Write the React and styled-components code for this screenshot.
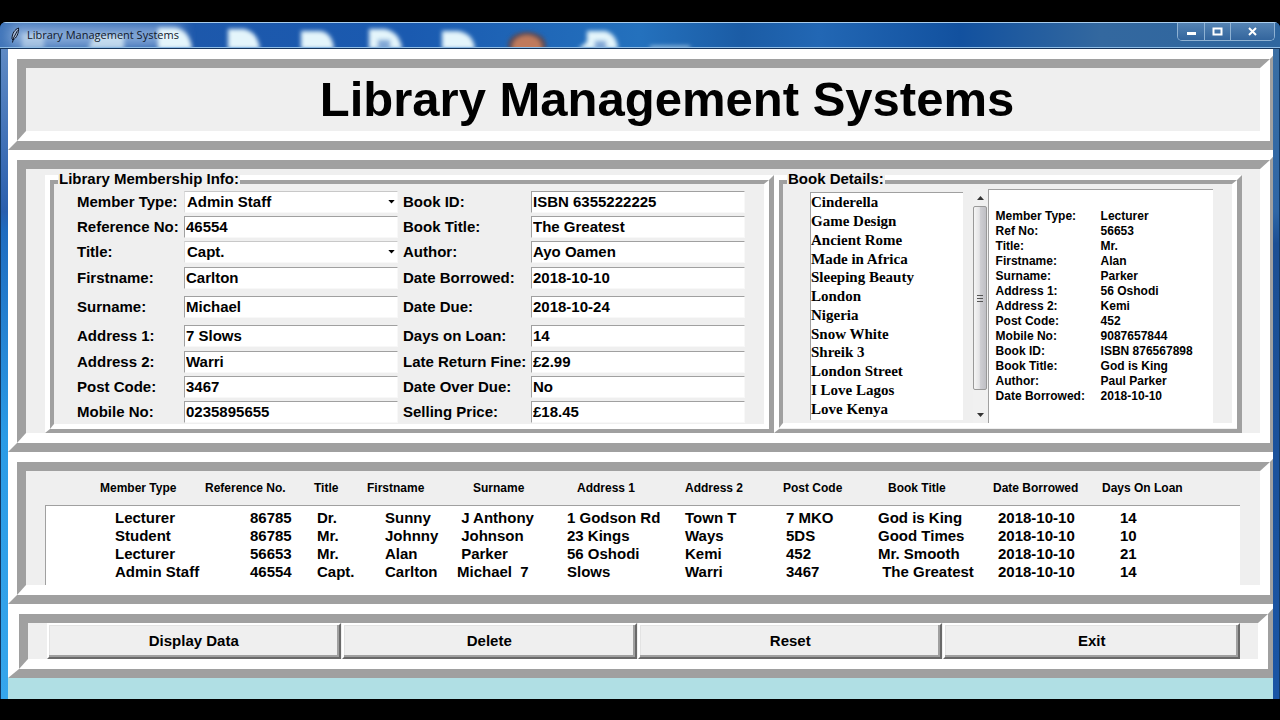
import React from "react";
import styled, { createGlobalStyle, css } from "styled-components";

const WHITE = "#ffffff";
const GREY = "#a0a0a0";
const FACE = "#efefef";
const SANS = '"Liberation Sans", Arial, sans-serif';

const GlobalStyle = createGlobalStyle`
  * { box-sizing: border-box; }
  body { margin: 0; background: #000; font-family: ${SANS}; color: #000; }
`;

const Screen = styled.div`
  display: flex;
  flex-direction: column;
  min-height: 100vh;
  padding: 22px 0 21px;
  background: #000;
`;

const Window = styled.div`
  flex: 1;
  display: flex;
  flex-direction: column;
  border-radius: 6px 6px 0 0;
  overflow: hidden;
`;

const TitleBar = styled.header`
  position: relative;
  display: flex;
  align-items: center;
  height: 27px;
  padding: 0 0 2px 9px;
  border-top: 1px solid #a9cdec;
  border-bottom: 1px solid #16355c;
  background: #1a5bab;
  overflow: hidden;
`;

const Wallpaper = styled.svg`
  position: absolute;
  inset: 0;
  width: 100%;
  height: 100%;
`;

const Feather = styled.svg`
  position: relative;
  width: 12px;
  height: 16px;
`;

const WindowTitle = styled.span`
  position: relative;
  padding-left: 6px;
  font: 11px/16px "Open Sans", "Noto Sans", sans-serif;
  color: #10182c;
`;

const Caption = styled.div`
  position: relative;
  align-self: flex-start;
  display: flex;
  margin-left: auto;
  margin-right: 5px;
  border: 1px solid #8fb2d3;
  border-top: 0;
  border-radius: 0 0 5px 5px;
  overflow: hidden;
`;

const CaptionButton = styled.button`
  display: flex;
  align-items: center;
  justify-content: center;
  width: ${(p) => (p.$wide ? 44 : 26)}px;
  height: 17px;
  padding: 0;
  border: 0;
  border-left: ${(p) => (p.$first ? 0 : 1)}px solid #8fb2d3;
  background: linear-gradient(#5483b3, #33659d);
`;

const SideEdges = styled.div`
  flex: 1;
  display: flex;
  flex-direction: column;
  border-left: 1px solid #123a66;
  border-right: 1px solid #123a66;
  background: linear-gradient(#5f8ac4 0%, #2a5fae 25%, #1f6cc0 28%, #2b9be6 60%, #36a6ec 100%) left / 50% 100% no-repeat,
    linear-gradient(#3a6ea3 0%, #2e66a6 25%, #1c4f94 30%, #1a55a5 100%) right / 50% 100% no-repeat;
`;

const Client = styled.main`
  flex: 1;
  margin: 0 6px 0 7px;
  background: #b0dfe4;
  overflow: hidden;
`;

/* A wide ridge: a raised outer band round a sunken inner band. */
const Outer = styled.section`
  margin-right: ${(p) => (p.$inset ? -4 : -6)}px;
  border-style: solid;
  border-width: 10px 9px 9px ${(p) => (p.$inset ? 11 : 9)}px;
  border-color: ${WHITE} ${GREY} ${GREY} ${WHITE};
`;

const Inner = styled.div`
  border-style: solid;
  border-width: 9px 10px 10px 9px;
  border-color: ${GREY} ${WHITE} ${WHITE} ${GREY};
  background: ${FACE};
`;

const Panel = ({ inset, children }) => (
  <Outer $inset={inset}>
    <Inner>{children}</Inner>
  </Outer>
);

const Heading = styled.h1`
  margin: 0;
  padding-left: 48px;
  font-size: 49px;
  line-height: 63px;
  text-align: center;
`;

const Details = styled.div`
  display: flex;
  align-items: stretch;
  padding: 0 18px 0 19px;
`;

const Group = styled.fieldset`
  flex: ${(p) => p.$share} 1 0;
  display: flex;
  flex-direction: column;
  min-width: 0;
  margin: 0;
  padding: 0;
  border-style: solid;
  border-width: 5px 5px 4px 5px;
  border-color: ${WHITE} ${GREY} ${GREY} ${WHITE};
`;

const Legend = styled.legend`
  position: relative;
  z-index: 1;
  margin-left: 8px;
  padding: 3px 1px 0;
  background: ${FACE};
  font-weight: bold;
  font-size: 15px;
  line-height: 14px;
`;

const GroupBody = styled.div`
  display: flex;
  margin-top: -6px;
  border-style: solid;
  border-width: 4px 5px 5px 4px;
  border-color: ${GREY} ${WHITE} ${WHITE} ${GREY};
`;

const Fields = styled.div`
  flex: 1;
  display: grid;
  grid-template-columns: 107px minmax(0, 1fr) 133px minmax(0, 1fr);
  grid-template-rows: 25px 25px 25px 27px 31px 27px 25px 25px 25px;
  align-items: center;
  padding: 5px 19px 0 23px;
`;

const Label = styled.label`
  padding-left: ${(p) => (p.$second ? 5 : 0)}px;
  font-weight: bold;
  font-size: 15px;
  line-height: 18px;
  white-space: nowrap;
`;

const fieldBox = css`
  width: 100%;
  min-width: 0;
  height: 22px;
  margin: 0;
  border: 1px solid ${GREY};
  border-right-color: #f8f8f8;
  border-bottom-color: #f8f8f8;
  border-radius: 0;
  outline: 0;
  background-color: #fff;
  color: #000;
  font: bold 15px/18px ${SANS};
`;

const TextField = styled.input`
  ${fieldBox}
  padding: 0 1px;
`;

const ComboWrap = styled.div`
  position: relative;
  display: flex;
`;

const Combo = styled.select`
  ${fieldBox}
  appearance: none;
  padding: 0 20px 0 2px;
  border-top-color: #c8c8c8;
  border-left-color: #dcdcdc;
`;

const ComboArrow = styled.svg`
  position: absolute;
  right: 3px;
  top: 9px;
  width: 7px;
  height: 4px;
  pointer-events: none;
`;

const BookPane = styled.div`
  flex: 1;
  display: flex;
  align-items: stretch;
  height: 239px;
  padding: 5px 19px 0 27px;
`;

const BookList = styled.select`
  flex: 152 1 0;
  min-width: 0;
  height: 228px;
  margin: 3px 10px 0 0;
  padding: 0;
  border: 1px solid ${GREY};
  border-right: 0;
  border-bottom: 0;
  border-radius: 0;
  outline: 0;
  overflow: hidden;
  background: #fff;
  color: #000;
  font: bold 15px/19px "Liberation Serif", "Times New Roman", serif;
`;

const Book = styled.option`
  height: 19px;
  min-height: 0;
  padding: 1px 0 0;
  font-weight: bold;
  line-height: 18px;
  &:nth-child(4n) { height: 18px; }
`;

const Scrollbar = styled.div`
  display: flex;
  flex-direction: column;
  width: 15px;
  background: #f0f0f0;
`;

const ScrollButton = styled.button`
  display: flex;
  align-items: center;
  justify-content: center;
  width: 15px;
  height: 17px;
  padding: 0;
  border: 0;
  background: transparent;
`;

const Thumb = styled.div`
  display: flex;
  flex-direction: column;
  align-items: center;
  justify-content: center;
  gap: 2px;
  height: 184px;
  width: 14px;
  border: 1px solid #999;
  border-radius: 2px;
  background: linear-gradient(90deg, #f5f5f5, #e4e4e6 45%, #cfcfd3 50%, #bfbfc4);
`;

const Grip = styled.span`
  width: 6px;
  height: 1px;
  background: #555;
`;

const Track = styled.div`
  flex: 1;
`;

const Receipt = styled.dl`
  flex: 218 1 0;
  display: grid;
  grid-template-columns: 105px 1fr;
  grid-auto-rows: 15px;
  margin: 0;
  padding: 19px 0 0 7px;
  border-top: 1px solid ${GREY};
  border-left: 1px solid ${GREY};
  background: #fff;
  font-weight: bold;
  font-size: 12px;
  line-height: 15px;
  white-space: nowrap;

  dd { margin: 0; }
`;

const Loans = styled.div`
  padding: 0 20px 0 19px;
`;

const LoanTable = styled.table`
  width: 100%;
  table-layout: fixed;
  border-collapse: separate;
  border-spacing: 0;
`;

const HeadCell = styled.th`
  height: 34px;
  padding: 0 0 0 ${(p) => p.$indent}px;
  font-size: 12px;
  text-align: left;
  white-space: nowrap;
`;

const Cell = styled.td`
  height: 18px;
  padding: 0 0 0 ${(p) => p.$indent}px;
  background: #fff;
  font-weight: bold;
  font-size: 15px;
  line-height: 18px;
  white-space: pre;

  &:first-child { border-left: 1px solid ${GREY}; }
  tr:first-child > & { padding-top: 3px; border-top: 1px solid ${GREY}; }
  tr:last-child > & { padding-bottom: 4px; }
`;

const Actions = styled.div`
  display: grid;
  grid-template-columns: 294fr 296fr 305fr 297fr;
  column-gap: 1px;
  padding: 0 18px 0 19px;
`;

const ActionButton = styled.button`
  height: 36px;
  padding: 0;
  border-style: solid;
  border-width: 2px;
  border-color: ${WHITE} #696969 #696969 ${WHITE};
  border-radius: 0;
  box-shadow: inset -2px -2px 0 ${GREY}, inset 1px 1px 0 #e3e3e3;
  background: ${FACE};
  color: #000;
  font: bold 15px/18px ${SANS};
`;

const fields = [
  ["Member Type:", "Admin Staff", "Book ID:", "ISBN 6355222225"],
  ["Reference No:", "46554", "Book Title:", "The Greatest"],
  ["Title:", "Capt.", "Author:", "Ayo Oamen"],
  ["Firstname:", "Carlton", "Date Borrowed:", "2018-10-10"],
  ["Surname:", "Michael", "Date Due:", "2018-10-24"],
  ["Address 1:", "7 Slows", "Days on Loan:", "14"],
  ["Address 2:", "Warri", "Late Return Fine:", "£2.99"],
  ["Post Code:", "3467", "Date Over Due:", "No"],
  ["Mobile No:", "0235895655", "Selling Price:", "£18.45"],
];
const combos = new Set(["Member Type:", "Title:"]);

const books = [
  "Cinderella", "Game Design", "Ancient Rome", "Made in Africa",
  "Sleeping Beauty", "London", "Nigeria", "Snow White", "Shreik 3",
  "London Street", "I Love Lagos", "Love Kenya",
];

const receipt = [
  ["Member Type:", "Lecturer"],
  ["Ref No:", "56653"],
  ["Title:", "Mr."],
  ["Firstname:", "Alan"],
  ["Surname:", "Parker"],
  ["Address 1:", "56 Oshodi"],
  ["Address 2:", "Kemi"],
  ["Post Code:", "452"],
  ["Mobile No:", "9087657844"],
  ["Book ID:", "ISBN 876567898"],
  ["Book Title:", "God is King"],
  ["Author:", "Paul Parker"],
  ["Date Borrowed:", "2018-10-10"],
];

/* Heading, column width, heading indent, value indent */
const columns = [
  ["Member Type", 160, 55, 69],
  ["Reference No.", 109, 0, 45],
  ["Title", 53, 0, 3],
  ["Firstname", 90, 0, 18],
  ["Surname", 110, 16, 0],
  ["Address 1", 118, 10, 0],
  ["Address 2", 98, 0, 0],
  ["Post Code", 95, 0, 3],
  ["Book Title", 115, 10, 0],
  ["Date Borrowed", 109, 0, 5],
  ["Days On Loan", 138, 0, 18],
];

const loans = [
  ["Lecturer", "86785", "Dr.", "Sunny", " J Anthony", "1 Godson Rd", "Town T", "7 MKO", "God is King", "2018-10-10", "14"],
  ["Student", "86785", "Mr.", "Johnny", " Johnson", "23 Kings", "Ways", "5DS", "Good Times", "2018-10-10", "10"],
  ["Lecturer", "56653", "Mr.", "Alan", " Parker", "56 Oshodi", "Kemi", "452", "Mr. Smooth", "2018-10-10", "21"],
  ["Admin Staff", "46554", "Capt.", "Carlton", "Michael  7", "Slows", "Warri", "3467", " The Greatest", "2018-10-10", "14"],
];

const idOf = (label) => label.toLowerCase().replace(/[^a-z0-9]+/g, "");

const Field = ({ label, value, second }) => (
  <>
    <Label htmlFor={idOf(label)} $second={second}>{label}</Label>
    {combos.has(label) ? (
      <ComboWrap>
        <Combo id={idOf(label)} defaultValue={value}>
          <option>{value}</option>
        </Combo>
        <ComboArrow viewBox="0 0 8 5" aria-hidden="true"><path d="M0 0H8L4 4.5Z" /></ComboArrow>
      </ComboWrap>
    ) : (
      <TextField id={idOf(label)} defaultValue={value} />
    )}
  </>
);

const Desktop = () => (
  <Wallpaper aria-hidden="true">
    <defs>
      <filter id="soft" x="-20%" y="-50%" width="140%" height="200%"><feGaussianBlur stdDeviation="2" /></filter>
      <filter id="glow" x="-20%" y="-80%" width="140%" height="260%"><feGaussianBlur stdDeviation="7" /></filter>
      <linearGradient id="sky">
        <stop offset="0" stopColor="#3f74b8" />
        <stop offset="0.15" stopColor="#1d58ab" />
        <stop offset="0.32" stopColor="#1a5ab0" />
        <stop offset="0.5" stopColor="#2471bd" />
        <stop offset="0.58" stopColor="#1b5ca5" />
        <stop offset="0.64" stopColor="#2267b4" />
        <stop offset="0.75" stopColor="#12519f" />
        <stop offset="0.86" stopColor="#33689f" />
        <stop offset="1" stopColor="#2f669f" />
      </linearGradient>
    </defs>
    <rect width="100%" height="100%" fill="url(#sky)" />
    <rect x="10" y="3" width="172" height="20" fill="#a3bfe4" opacity="0.8" filter="url(#glow)" />
    <g fill="#e4f5fb" filter="url(#soft)">
      <path d="M22 26V10H44V26Z" opacity="0.45" />
      <path d="M88 26L94 12H124V26Z" opacity="0.7" />
      <path d="M158 26V5H176Q190 8 192 26Z" />
      <path d="M228 26V6H244Q258 9 260 26Z" />
      <path d="M301 26V8H320Q332 9 334 26Z" />
      <path d="M369 26V6H385Q400 9 402 26Z" />
      <path d="M442 26V8H458Q473 10 475 26Z" />
      <path d="M578 26L587 19V8H606Q617 12 618 26Z" />
      <path d="M650 26V23H690V26Z" opacity="0.7" />
    </g>
    <g fill="#1a5ab0" opacity="0.5" filter="url(#soft)">
      <path d="M378 26V17H390V26Z" />
      <path d="M595 26V18H606V26Z" />
    </g>
    <ellipse cx="527" cy="22" rx="19" ry="13" fill="#5a4a55" filter="url(#soft)" />
    <ellipse cx="527" cy="24" rx="15" ry="12" fill="#c07a5c" filter="url(#soft)" />
    <rect y="24" width="100%" height="1" fill="#8fbde6" />
  </Wallpaper>
);

export default function App() {
  return (
    <Screen>
      <GlobalStyle />
      <Window>
        <TitleBar>
          <Desktop />
          <Feather viewBox="0 0 12 16" aria-hidden="true">
            <path d="M9.500 1C6 2.500 3 6 3 12L4 13C7.500 11 10 6 9.500 1Z" fill="#a9bcd8" stroke="#0c1426" />
            <path d="M8.500 3.500L4.500 11L3.500 15.500" fill="none" stroke="#0c1426" />
          </Feather>
          <WindowTitle>Library Management Systems</WindowTitle>
          <Caption>
            <CaptionButton $first type="button" aria-label="Minimize">
              <svg width="11" height="9"><rect x="1" y="5" width="9" height="3" fill="#fff" /></svg>
            </CaptionButton>
            <CaptionButton type="button" aria-label="Maximize">
              <svg width="11" height="9"><rect x="1.500" y="1.500" width="8" height="6" fill="none" stroke="#fff" strokeWidth="2" /></svg>
            </CaptionButton>
            <CaptionButton $wide type="button" aria-label="Close">
              <svg width="11" height="9"><path d="M2 1L9 8M9 1L2 8" stroke="#fff" strokeWidth="2" /></svg>
            </CaptionButton>
          </Caption>
        </TitleBar>
        <SideEdges>
          <Client>
            <Panel>
              <Heading>Library Management Systems</Heading>
            </Panel>
            <Panel>
              <Details>
                <Group $share={719}>
                  <Legend>Library Membership Info:</Legend>
                  <GroupBody>
                    <Fields>
                      {fields.map(([a, av, b, bv]) => (
                        <React.Fragment key={a}>
                          <Field label={a} value={av} />
                          <Field label={b} value={bv} second />
                        </React.Fragment>
                      ))}
                    </Fields>
                  </GroupBody>
                </Group>
                <Group $share={458}>
                  <Legend>Book Details:</Legend>
                  <GroupBody>
                    <BookPane>
                      <BookList size={12} aria-label="Books">
                        {books.map((b) => <Book key={b}>{b}</Book>)}
                      </BookList>
                      <Scrollbar>
                        <ScrollButton type="button" aria-label="Scroll up">
                          <svg width="7" height="4"><path d="M0 4H7L3.500 0Z" fill="#333" /></svg>
                        </ScrollButton>
                        <Thumb><Grip /><Grip /><Grip /></Thumb>
                        <Track />
                        <ScrollButton type="button" aria-label="Scroll down">
                          <svg width="7" height="4"><path d="M0 0H7L3.500 4Z" fill="#333" /></svg>
                        </ScrollButton>
                      </Scrollbar>
                      <Receipt>
                        {receipt.map(([k, v]) => (
                          <React.Fragment key={k}>
                            <dt>{k}</dt>
                            <dd>{v}</dd>
                          </React.Fragment>
                        ))}
                      </Receipt>
                    </BookPane>
                  </GroupBody>
                </Group>
              </Details>
            </Panel>
            <Panel>
              <Loans>
                <LoanTable>
                  <colgroup>
                    {columns.map(([name, width]) => <col key={name} width={width} />)}
                  </colgroup>
                  <thead>
                    <tr>
                      {columns.map(([name, , indent]) => (
                        <HeadCell key={name} scope="col" $indent={indent}>{name}</HeadCell>
                      ))}
                    </tr>
                  </thead>
                  <tbody>
                    {loans.map((row) => (
                      <tr key={row[0] + row[3]}>
                        {row.map((value, i) => (
                          <Cell key={columns[i][0]} $indent={columns[i][3]}>{value}</Cell>
                        ))}
                      </tr>
                    ))}
                  </tbody>
                </LoanTable>
              </Loans>
            </Panel>
            <Panel inset>
              <Actions>
                {["Display Data", "Delete", "Reset", "Exit"].map((name) => (
                  <ActionButton key={name} type="button">{name}</ActionButton>
                ))}
              </Actions>
            </Panel>
          </Client>
        </SideEdges>
      </Window>
    </Screen>
  );
}
